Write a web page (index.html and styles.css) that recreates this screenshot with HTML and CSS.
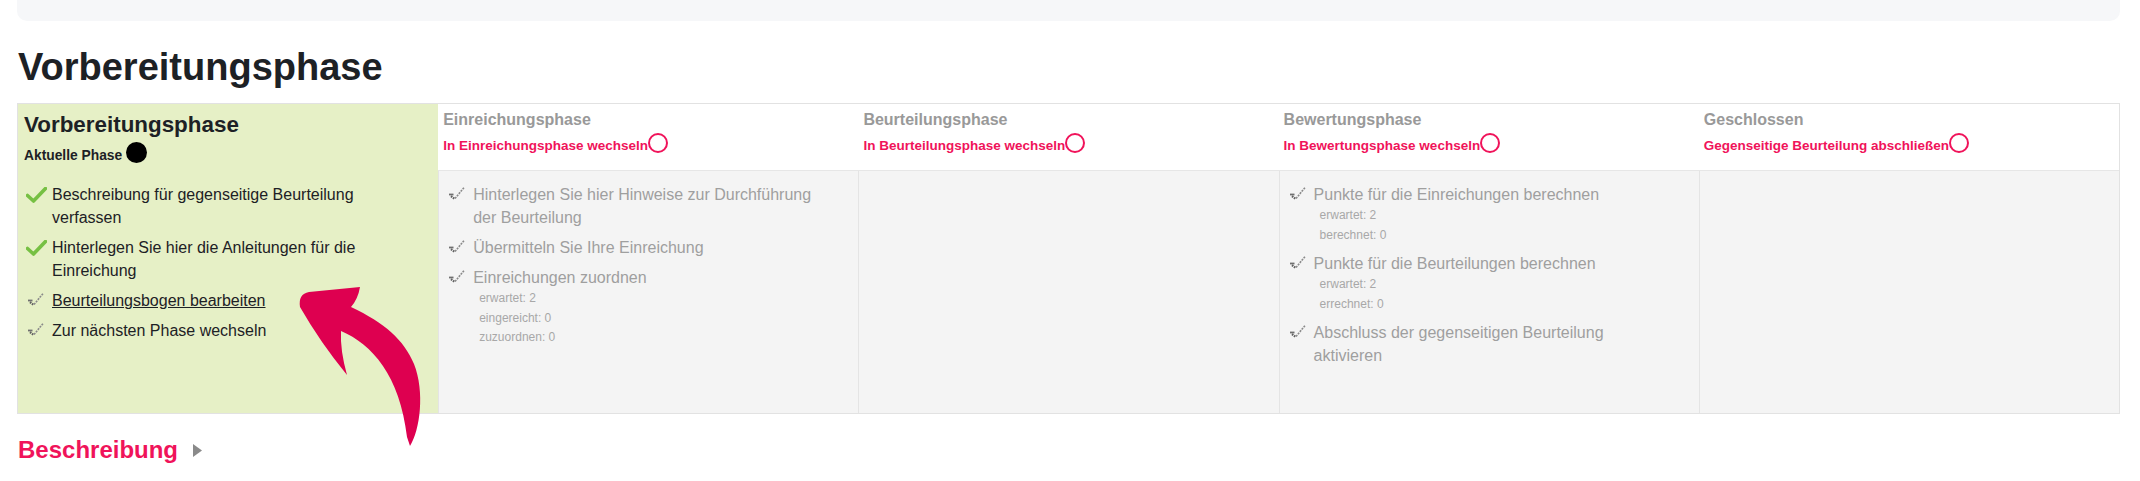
FILE: index.html
```html
<!DOCTYPE html>
<html lang="de">
<head>
<meta charset="utf-8">
<title>Vorbereitungsphase</title>
<link rel="stylesheet" href="styles.css">
</head>
<body>
<div class="page">
  <div class="topbar"></div>
  <h1 class="title">Vorbereitungsphase</h1>

  <div class="phases">
    <!-- header row -->
    <div class="cell head current">
      <div class="cur-title">Vorbereitungsphase</div>
      <div class="cur-state">Aktuelle Phase<span class="dot"></span></div>
    </div>
    <div class="cell head">
      <div class="ph-title">Einreichungsphase</div>
      <div class="switch">In Einreichungsphase wechseln<span class="ring"></span></div>
    </div>
    <div class="cell head">
      <div class="ph-title">Beurteilungsphase</div>
      <div class="switch">In Beurteilungsphase wechseln<span class="ring"></span></div>
    </div>
    <div class="cell head">
      <div class="ph-title">Bewertungsphase</div>
      <div class="switch">In Bewertungsphase wechseln<span class="ring"></span></div>
    </div>
    <div class="cell head">
      <div class="ph-title">Geschlossen</div>
      <div class="switch">Gegenseitige Beurteilung abschließen<span class="ring"></span></div>
    </div>

    <!-- body row -->
    <div class="cell body current">
      <ul class="tasks">
        <li class="task"><span class="ico"><svg class="ok" viewBox="0 0 21 16" width="21" height="16"><path d="M1.5 8.5 L7.5 14 L19.5 1.5" fill="none" stroke="#76c043" stroke-width="3.6" stroke-linecap="round" stroke-linejoin="round"/></svg></span><div class="txt">Beschreibung für gegenseitige Beurteilung verfassen</div></li>
        <li class="task"><span class="ico"><svg class="ok" viewBox="0 0 21 16" width="21" height="16"><path d="M1.5 8.5 L7.5 14 L19.5 1.5" fill="none" stroke="#76c043" stroke-width="3.6" stroke-linecap="round" stroke-linejoin="round"/></svg></span><div class="txt">Hinterlegen Sie hier die Anleitungen für die Einreichung</div></li>
        <li class="task"><span class="ico"><svg class="todo" viewBox="0 0 18 14" width="18" height="14"><path d="M1 8.5 H5.5" stroke="#6f6f6f" stroke-width="1.8"/><path d="M3 10.2 L7 13.2" stroke="#5f5f5f" stroke-width="2.2" stroke-dasharray="1.6 0.9"/><path d="M7 12.5 L16.5 1" fill="none" stroke="#8a8a8a" stroke-width="1.6" stroke-dasharray="2 1"/></svg></span><div class="txt"><a class="task-link" href="#">Beurteilungsbogen bearbeiten</a></div></li>
        <li class="task"><span class="ico"><svg class="todo" viewBox="0 0 18 14" width="18" height="14"><path d="M1 8.5 H5.5" stroke="#6f6f6f" stroke-width="1.8"/><path d="M3 10.2 L7 13.2" stroke="#5f5f5f" stroke-width="2.2" stroke-dasharray="1.6 0.9"/><path d="M7 12.5 L16.5 1" fill="none" stroke="#8a8a8a" stroke-width="1.6" stroke-dasharray="2 1"/></svg></span><div class="txt">Zur nächsten Phase wechseln</div></li>
      </ul>
    </div>

    <div class="cell body">
      <ul class="tasks muted">
        <li class="task"><span class="ico"><svg class="todo" viewBox="0 0 18 14" width="18" height="14"><path d="M1 8.5 H5.5" stroke="#6f6f6f" stroke-width="1.8"/><path d="M3 10.2 L7 13.2" stroke="#5f5f5f" stroke-width="2.2" stroke-dasharray="1.6 0.9"/><path d="M7 12.5 L16.5 1" fill="none" stroke="#8a8a8a" stroke-width="1.6" stroke-dasharray="2 1"/></svg></span><div class="txt">Hinterlegen Sie hier Hinweise zur Durchführung der Beurteilung</div></li>
        <li class="task"><span class="ico"><svg class="todo" viewBox="0 0 18 14" width="18" height="14"><path d="M1 8.5 H5.5" stroke="#6f6f6f" stroke-width="1.8"/><path d="M3 10.2 L7 13.2" stroke="#5f5f5f" stroke-width="2.2" stroke-dasharray="1.6 0.9"/><path d="M7 12.5 L16.5 1" fill="none" stroke="#8a8a8a" stroke-width="1.6" stroke-dasharray="2 1"/></svg></span><div class="txt">Übermitteln Sie Ihre Einreichung</div></li>
        <li class="task"><span class="ico"><svg class="todo" viewBox="0 0 18 14" width="18" height="14"><path d="M1 8.5 H5.5" stroke="#6f6f6f" stroke-width="1.8"/><path d="M3 10.2 L7 13.2" stroke="#5f5f5f" stroke-width="2.2" stroke-dasharray="1.6 0.9"/><path d="M7 12.5 L16.5 1" fill="none" stroke="#8a8a8a" stroke-width="1.6" stroke-dasharray="2 1"/></svg></span><div class="txt">Einreichungen zuordnen
          <ul class="details">
            <li>erwartet: 2</li>
            <li>eingereicht: 0</li>
            <li>zuzuordnen: 0</li>
          </ul></div></li>
      </ul>
    </div>

    <div class="cell body"></div>

    <div class="cell body">
      <ul class="tasks muted">
        <li class="task"><span class="ico"><svg class="todo" viewBox="0 0 18 14" width="18" height="14"><path d="M1 8.5 H5.5" stroke="#6f6f6f" stroke-width="1.8"/><path d="M3 10.2 L7 13.2" stroke="#5f5f5f" stroke-width="2.2" stroke-dasharray="1.6 0.9"/><path d="M7 12.5 L16.5 1" fill="none" stroke="#8a8a8a" stroke-width="1.6" stroke-dasharray="2 1"/></svg></span><div class="txt">Punkte für die Einreichungen berechnen
          <ul class="details">
            <li>erwartet: 2</li>
            <li>berechnet: 0</li>
          </ul></div></li>
        <li class="task"><span class="ico"><svg class="todo" viewBox="0 0 18 14" width="18" height="14"><path d="M1 8.5 H5.5" stroke="#6f6f6f" stroke-width="1.8"/><path d="M3 10.2 L7 13.2" stroke="#5f5f5f" stroke-width="2.2" stroke-dasharray="1.6 0.9"/><path d="M7 12.5 L16.5 1" fill="none" stroke="#8a8a8a" stroke-width="1.6" stroke-dasharray="2 1"/></svg></span><div class="txt">Punkte für die Beurteilungen berechnen
          <ul class="details">
            <li>erwartet: 2</li>
            <li>errechnet: 0</li>
          </ul></div></li>
        <li class="task"><span class="ico"><svg class="todo" viewBox="0 0 18 14" width="18" height="14"><path d="M1 8.5 H5.5" stroke="#6f6f6f" stroke-width="1.8"/><path d="M3 10.2 L7 13.2" stroke="#5f5f5f" stroke-width="2.2" stroke-dasharray="1.6 0.9"/><path d="M7 12.5 L16.5 1" fill="none" stroke="#8a8a8a" stroke-width="1.6" stroke-dasharray="2 1"/></svg></span><div class="txt">Abschluss der gegenseitigen Beurteilung aktivieren</div></li>
      </ul>
    </div>

    <div class="cell body"></div>
  </div>

  <h2 class="section">Beschreibung<svg class="caret" viewBox="0 0 9 13" width="9" height="13"><path d="M0 0 L9 6.5 L0 13 Z" fill="#8a8a8a"/></svg></h2>

  <svg class="arrow" viewBox="0 0 140 170" width="140" height="170">
    <path d="M70 7 L19 12 Q8 14 10 27 Q30 62 57 95 Q50 70 51 51 C82 64 110 96 117 157 L120 166 C130 150 135 112 124 84 C114 60 95 43 61 27 Q68 19 70 7 Z" fill="#de0050"/>
  </svg>
</div>
</body>
</html>
```

FILE: styles.css
```css
* { box-sizing: border-box; }

html, body {
  margin: 0;
  background: #ffffff;
}

body {
  font-family: "Liberation Sans", Arial, Helvetica, sans-serif;
  color: #1d2125;
}

.page {
  position: relative;
  padding: 0 20px 0 17px;
  min-height: 481px;
}

.topbar {
  height: 21px;
  background: #f6f7f9;
  border-radius: 0 0 10px 10px;
}

.title {
  margin: 24px 0 13px 1px;
  font-size: 38px;
  line-height: 45px;
  font-weight: 700;
  color: #1d2125;
}

.phases {
  display: grid;
  grid-template-columns: repeat(5, 1fr);
  grid-template-rows: 67px 242px;
  border: 1px solid #e2e2e2;
}

.cell.head {
  background: #ffffff;
  padding: 6px 5px 0;
  border-bottom: 1px solid #e6e6e6;
}

.cell.body {
  background: #f4f4f4;
  border-left: 1px solid #e4e4e4;
  padding: 12px 30px 12px 8px;
}

.cell.current {
  background: #e6f0c6;
  border-bottom: 0;
  border-left: 0;
}

.cell.head.current {
  padding: 7px 6px 0;
}

.cur-title {
  font-size: 22.4px;
  line-height: 27px;
  font-weight: 700;
  color: #1d2125;
}

.cur-state {
  margin-top: 4px;
  height: 21px;
  display: flex;
  align-items: flex-end;
  gap: 4px;
  font-size: 13.8px;
  font-weight: 700;
  color: #1d2125;
}

.dot {
  width: 21px;
  height: 21px;
  border-radius: 50%;
  background: #000000;
  flex-shrink: 0;
}

.ph-title {
  font-size: 16px;
  line-height: 19px;
  font-weight: 700;
  color: #999999;
}

.switch {
  margin-top: 4px;
  height: 20px;
  display: flex;
  align-items: flex-end;
  font-size: 13.5px;
  font-weight: 700;
  color: #f0135a;
}

.ring {
  width: 20px;
  height: 20px;
  border-radius: 50%;
  border: 2px solid #f0135a;
  background: #ffffff;
  flex-shrink: 0;
}

.tasks {
  list-style: none;
  margin: 0;
  padding: 0;
}

.task {
  display: flex;
  font-size: 16px;
  line-height: 23px;
  margin-bottom: 7px;
  color: #1d2125;
}

.tasks.muted .task {
  color: #9f9f9f;
}

.ico {
  width: 26px;
  flex-shrink: 0;
  padding-top: 3px;
}

.ico .ok {
  display: block;
  margin-top: 1px;
}

.ico .todo {
  display: block;
  margin-left: 1px;
}

.txt {
  flex: 1;
  min-width: 0;
}

.task-link {
  color: #1d2125;
  text-decoration: underline;
}

.details {
  list-style: none;
  margin: 0;
  padding: 0 0 0 6px;
  font-size: 12px;
  line-height: 19.5px;
  color: #a8a8a8;
}

.section {
  margin: 21px 0 0 1px;
  font-size: 24px;
  line-height: 29px;
  font-weight: 700;
  color: #f0135a;
}

.caret {
  display: inline-block;
  margin-left: 15px;
  vertical-align: 1px;
}

.arrow {
  position: absolute;
  left: 290px;
  top: 280px;
}
```
